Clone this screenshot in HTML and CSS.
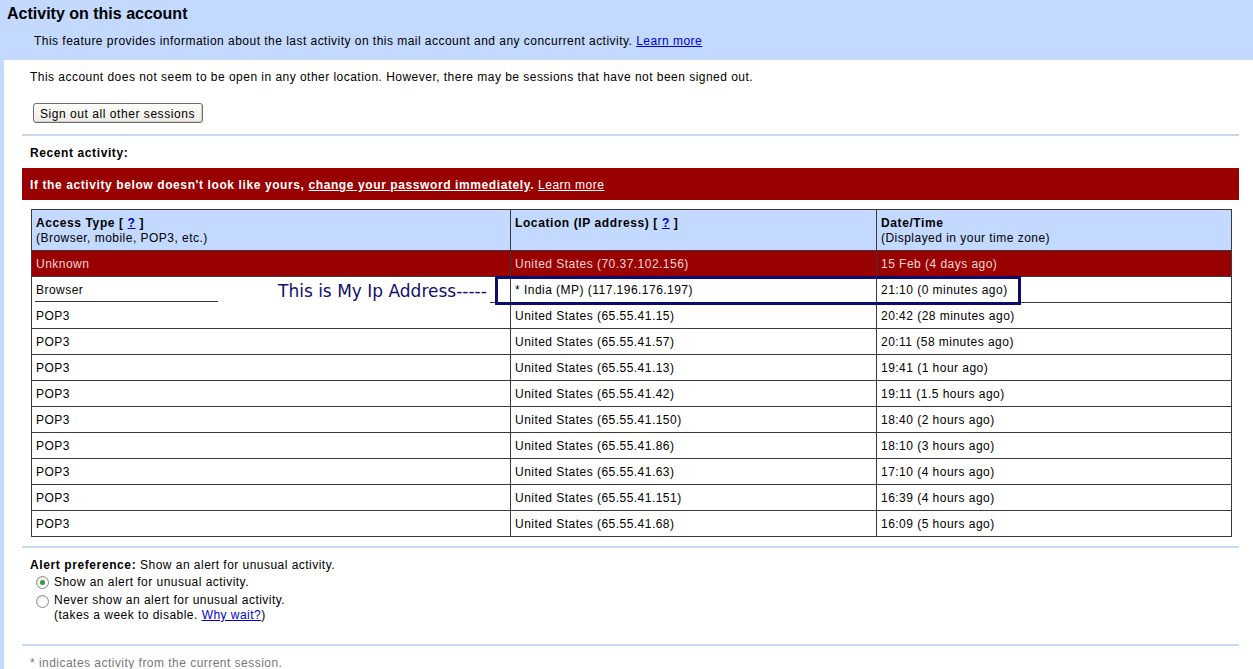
FILE: index.html
```html
<!DOCTYPE html>
<html>
<head>
<meta charset="utf-8">
<title>Activity on this account</title>
<link rel="stylesheet" href="styles.css">
</head>
<body>
<div class="page">
  <div class="hdr">
    <h1 class="title">Activity on this account</h1>
    <p class="intro">This feature provides information about the last activity on this mail account and any concurrent activity. <a href="#" class="link">Learn more</a></p>
  </div>
  <div class="panel">
    <p class="status">This account does not seem to be open in any other location. However, there may be sessions that have not been signed out.</p>
    <div class="btnrow"><button class="btn" type="button">Sign out all other sessions</button></div>
    <div class="sep sep-top"></div>
    <p class="recent">Recent activity:</p>
    <div class="warn">If the activity below doesn't look like yours, <a href="#" class="warn-strong">change your password immediately</a>. <a href="#" class="warn-link">Learn more</a></div>

    <div class="tablewrap">
      <table class="act">
        <colgroup>
          <col class="c1"><col class="c2"><col class="c3">
        </colgroup>
        <thead>
          <tr>
            <th><b>Access Type [ <a href="#" class="link">?</a> ]</b><br><span class="sub">(Browser, mobile, POP3, etc.)</span></th>
            <th><b>Location (IP address) [ <a href="#" class="link">?</a> ]</b></th>
            <th><b>Date/Time</b><br><span class="sub">(Displayed in your time zone)</span></th>
          </tr>
        </thead>
        <tbody>
          <tr class="bad"><td>Unknown</td><td>United States (70.37.102.156)</td><td>15 Feb (4 days ago)</td></tr>
          <tr class="cur"><td class="nob">Browser</td><td>* India (MP) (117.196.176.197)</td><td>21:10 (0 minutes ago)</td></tr>
          <tr><td>POP3</td><td>United States (65.55.41.15)</td><td>20:42 (28 minutes ago)</td></tr>
          <tr><td>POP3</td><td>United States (65.55.41.57)</td><td>20:11 (58 minutes ago)</td></tr>
          <tr><td>POP3</td><td>United States (65.55.41.13)</td><td>19:41 (1 hour ago)</td></tr>
          <tr><td>POP3</td><td>United States (65.55.41.42)</td><td>19:11 (1.5 hours ago)</td></tr>
          <tr><td>POP3</td><td>United States (65.55.41.150)</td><td>18:40 (2 hours ago)</td></tr>
          <tr><td>POP3</td><td>United States (65.55.41.86)</td><td>18:10 (3 hours ago)</td></tr>
          <tr><td>POP3</td><td>United States (65.55.41.63)</td><td>17:10 (4 hours ago)</td></tr>
          <tr><td>POP3</td><td>United States (65.55.41.151)</td><td>16:39 (4 hours ago)</td></tr>
          <tr><td>POP3</td><td>United States (65.55.41.68)</td><td>16:09 (5 hours ago)</td></tr>
        </tbody>
      </table>
      <div class="note-line"></div>
      <div class="note-tick"></div>
      <div class="note-text">This is My Ip Address-----</div>
      <div class="note-box"></div>
    </div>

    <div class="sep sep-mid"></div>
    <div class="alert">
      <p class="alert-head"><b>Alert preference:</b> Show an alert for unusual activity.</p>
      <div class="opt opt1"><span class="radio on"></span><span>Show an alert for unusual activity.</span></div>
      <div class="opt opt2"><span class="radio"></span><span>Never show an alert for unusual activity.<br>(takes a week to disable. <a href="#" class="link">Why wait?</a>)</span></div>
    </div>
    <div class="sep sep-bot"></div>
    <p class="foot">* indicates activity from the current session.</p>
  </div>
</div>
</body>
</html>
```

FILE: styles.css
```css
html, body {
  margin: 0;
  padding: 0;
  background: #c3d9ff;
}
body {
  font-family: "Liberation Sans", Arial, sans-serif;
  font-size: 12px;
  letter-spacing: 0.47px;
  color: #000;
}
b, .recent, .warn, .title {
  letter-spacing: 0.6px;
}
.page {
  width: 1253px;
  min-height: 669px;
}
.hdr {
  height: 60px;
  box-sizing: border-box;
  padding-top: 4px;
}
.title {
  margin: 0 0 0 7px;
  font-size: 16px;
  line-height: 20px;
  font-weight: bold;
  letter-spacing: 0;
}
.intro {
  margin: 10px 0 0 34px;
  line-height: 14px;
}
.link {
  color: #0000cc;
  text-decoration: underline;
}
.panel {
  margin-left: 4px;
  background: #fff;
  padding: 0 14px 20px 18px;
}
.status {
  margin: 0;
  padding: 10px 0 0 8px;
  line-height: 14px;
}
.btnrow {
  margin-top: 19px;
  padding-left: 11px;
  height: 20px;
}
.btn {
  font-family: "Liberation Sans", Arial, sans-serif;
  font-size: 12px;
  letter-spacing: 0.55px;
  height: 20px;
  line-height: 16px;
  padding: 1px 7px 0 6px;
  margin: 0;
  border: 1px solid #6d6d6d;
  border-radius: 3px;
  background: linear-gradient(#fdfdfb, #ecebe6);
  color: #000;
  box-shadow: inset -1px -1px 0 #d4d0c8;
}
.sep {
  height: 2px;
  background: #c9d7f1;
}
.sep-top { margin-top: 11px; }
.recent {
  margin: 10px 0 0 8px;
  font-weight: bold;
  line-height: 14px;
}
.warn {
  margin-top: 8px;
  height: 31px;
  padding-top: 1px;
  line-height: 32px;
  overflow: hidden;
  background: #990000;
  color: #fff;
  font-weight: bold;
  padding-left: 8px;
}
.warn-strong {
  color: #fff;
  text-decoration: underline;
}
.warn-link {
  color: #fff;
  font-weight: normal;
  letter-spacing: 0.5px;
  text-decoration: underline;
}
.tablewrap {
  position: relative;
  margin: 9px 9px 0 9px;
}
.act {
  width: 1200px;
  table-layout: fixed;
  border-collapse: collapse;
  border: 1px solid #3a3a3a;
}
.c1 { width: 479px; }
.c2 { width: 366px; }
.c3 { width: 355px; }
.act th, .act td {
  border: 1px solid #3a3a3a;
  text-align: left;
  vertical-align: top;
  padding: 0 4px;
}
.act th {
  background: #c3d9ff;
  padding-top: 6px;
  padding-bottom: 4px;
  height: 30px;
  line-height: 15px;
  font-weight: normal;
}
.act td {
  height: 24px;
  padding-top: 1px;
  line-height: 24px;
  vertical-align: middle;
  white-space: nowrap;
}
.act tr.bad td {
  background: #990000;
  color: #f6d6d6;
}
.act td.nob {
  border-bottom-style: hidden;
}
.note-line {
  position: absolute;
  left: 4px;
  top: 92px;
  width: 183px;
  height: 1px;
  background: #333;
}
.note-tick {
  position: absolute;
  left: 459px;
  top: 93px;
  width: 7px;
  height: 1px;
  background: #333;
}
.note-text {
  position: absolute;
  left: 247px;
  top: 72px;
  font-family: "DejaVu Sans", Verdana, sans-serif;
  font-size: 17px;
  letter-spacing: 0;
  line-height: 20px;
  color: #0f0f6e;
  white-space: nowrap;
}
.note-box {
  position: absolute;
  left: 464px;
  top: 67px;
  width: 520px;
  height: 23px;
  border: 3px solid #0c0c6e;
}
.sep-mid { margin-top: 9px; }
.alert {
  padding-left: 8px;
  padding-top: 10px;
}
.alert-head {
  margin: 0;
  line-height: 14px;
}
.opt {
  display: flex;
  align-items: flex-start;
  padding-left: 6px;
}
.opt1 {
  margin-top: 1px;
  line-height: 18px;
}
.opt2 {
  margin-top: 2px;
  line-height: 16px;
}
.opt2 span:last-child {
  line-height: 15px;
}
.radio {
  width: 11px;
  height: 11px;
  border: 1px solid #8a8a8a;
  border-radius: 50%;
  background: radial-gradient(circle at 60% 65%, #ffffff 30%, #dcdcd4 100%);
  margin-right: 5px;
  flex: none;
  position: relative;
}
.opt1 .radio { margin-top: 3px; }
.opt2 .radio { margin-top: 2px; }
.radio.on::after {
  content: "";
  position: absolute;
  left: 3px;
  top: 3px;
  width: 5px;
  height: 5px;
  border-radius: 50%;
  background: #2f9c3a;
}
.sep-bot { margin-top: 21px; }
.foot {
  margin: 10px 0 0 8px;
  line-height: 14px;
  color: #777;
}
```
